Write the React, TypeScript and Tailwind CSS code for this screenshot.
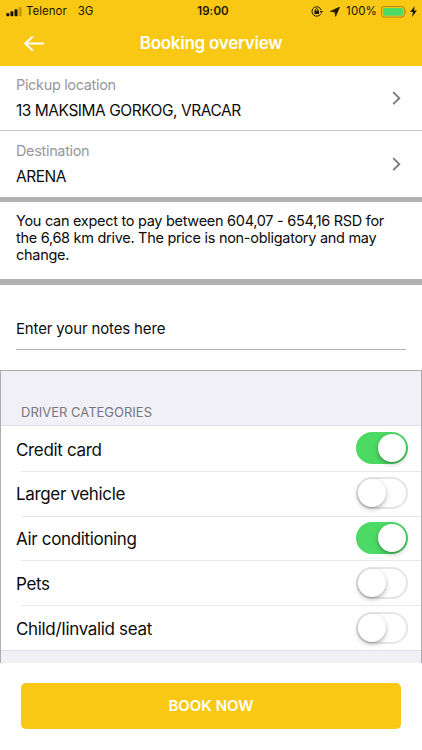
import { useState } from 'react';

type Location = {
    label: string;
    value: string;
};

const LOCATIONS: Location[] = [
    { label: "Pickup location", value: "13 MAKSIMA GORKOG, VRACAR" },
    { label: "Destination", value: "ARENA" }
];

const CATEGORIES = [
    { name: "Credit card", enabled: true },
    { name: "Larger vehicle", enabled: false },
    { name: "Air conditioning", enabled: true },
    { name: "Pets", enabled: false },
    { name: "Child/Iinvalid seat", enabled: false }
];

function StatusBar() {
    return(
        <div className="grid grid-cols-3 h-[22px] items-center pt-px text-[11.5px] leading-none text-[#1c1600]">
            <div className="flex items-center pl-1.5">
                <svg className="mr-1 h-2.5 w-4" viewBox="0 0 16 10">
                    <rect x="0.3" y="6" width="3" height="3.2" rx="0.8" fill="#1c1600" />
                    <rect x="4.4" y="4.3" width="3" height="4.9" rx="0.8" fill="#1c1600" />
                    <rect x="8.5" y="2.3" width="3" height="6.9" rx="0.8" fill="#1c1600" />
                    <rect x="12.7" y="0" width="3" height="9.2" rx="0.8" fill="#1c1600" opacity="0.25" />
                </svg>
                <span>Telenor</span>
                <span className="ml-[11px]">3G</span>
            </div>
            <p className="text-center font-semibold pl-1 tracking-[0.1px]">19:00</p>
            <div className="flex items-center justify-end pr-[5px]">
                <svg className="mr-[7px] h-[11px] w-3" viewBox="0 0 12 11" fill="none" stroke="#1c1600">
                    <path d="M9.9 7.6A4.7 4.7 0 1 1 10.2 4.2" strokeWidth="1" />
                    <path d="M8.7 5H12L10.4 7.2Z" fill="#1c1600" stroke="none" />
                    <rect x="3.4" y="4.7" width="4.6" height="3.4" rx="0.4" fill="#1c1600" stroke="none" />
                    <path d="M4.4 5V4A1.3 1.3 0 0 1 7 4V5" strokeWidth="0.9" />
                </svg>
                <svg className="mr-1.5 h-2.5 w-2.5" viewBox="0 0 10 10">
                    <path d="M9.7 0L5.6 9.4L4.9 5L0.2 4.4Z" fill="#1c1600" stroke="#1c1600" strokeWidth="0.6" strokeLinejoin="round" />
                </svg>
                <span className="mr-1 tracking-[0.1px]">100%</span>
                <svg className="mr-[3px] h-3 w-[26px]" viewBox="0 0 26 12">
                    <rect x="0.5" y="0.5" width="22.8" height="10.6" rx="2.4" fill="none" stroke="#a98a1c" />
                    <rect x="1.9" y="1.9" width="20" height="7.8" rx="1.2" fill="#4cd964" />
                    <path d="M24.4 4.1Q26.4 5.8 24.4 7.5Z" fill="#a98a1c" />
                </svg>
                <svg className="h-[11px] w-[7px]" viewBox="0 0 7 11">
                    <path d="M4.8 0L0.2 6.1H3L2 11L6.9 4.5H4Z" fill="#1c1600" />
                </svg>
            </div>
        </div>
    );
}

function Header() {
    return(
        <header className="h-[66px] bg-[#f9c814]">
            <StatusBar />
            <div className="grid grid-cols-[60px_1fr_60px] h-[43px] items-center">
                <button className="pl-6" aria-label="Back">
                    <svg className="h-4 w-5" viewBox="0 0 20 16" fill="none" stroke="white" strokeWidth="2" strokeLinecap="round" strokeLinejoin="round">
                        <path d="M19.2 7.5H1.2M8.2 0.9L1.2 7.5L8.2 14.1" />
                    </svg>
                </button>
                <h1 className="text-center text-[17px] font-semibold tracking-[-0.25px] text-white">Booking overview</h1>
            </div>
        </header>
    );
}

function LocationRow({ label, value }: Location) {
    return(
        <div className="flex items-center justify-between pl-4 pr-[21px] h-[65px]">
            <div>
                <p className="text-[14.5px] leading-[26px] tracking-[-0.34px] text-[#98989a]">{label}</p>
                <p className="text-[15.5px] leading-[26px] tracking-[-0.47px]">{value}</p>
            </div>
            <svg className="h-3.5 w-[9px]" viewBox="0 0 9 14" fill="none" stroke="#777" strokeWidth="1.8">
                <path d="M1.2 1.2L7.3 7.2L1.2 13.2" />
            </svg>
        </div>
    );
}

function Switch({ on, label, onToggle }: { on: boolean; label: string; onToggle: () => void }) {
    return(
        <button
            role="switch"
            aria-checked={on}
            aria-label={label}
            onClick={onToggle}
            className={`flex items-center h-8 w-[52px] rounded-full border-2 ${on ? "justify-end border-[#4cd964] bg-[#4cd964]" : "justify-start border-[#e5e5e5] bg-white"}`}
        >
            <span className={`size-7 rounded-full bg-white shadow-[0_2px_5px_rgba(0,0,0,0.28),0_1px_1px_rgba(0,0,0,0.12)] ${on ? "" : "-ml-[0.5px]"}`} />
        </button>
    );
}

function DriverCategories() {
    const [categories, setCategories] = useState(CATEGORIES);

    const toggle = (name: string) => {
        setCategories(categories.map((c) => c.name === name ? { ...c, enabled: !c.enabled } : c));
    };

    return(
        <section className="h-[293px] border-t border-x border-[#adadb0] bg-[#f1f0f7]">
            <h2 className="flex h-[55px] items-end border-b border-[#e2e1e6] pl-5 pb-[3px] text-[13px] leading-5 text-[#77777b]">
                DRIVER CATEGORIES
            </h2>
            <ul className="bg-white border-b border-[#e0dfe4]">
                {categories.map((category, i) => (
                    <li key={category.name} className="h-[44.8px]">
                        <div className="flex h-full items-center justify-between pl-[15px] pr-[13px]">
                            <span className="pt-1 text-[17px] tracking-[-0.34px]">{category.name}</span>
                            <Switch on={category.enabled} label={category.name} onToggle={() => toggle(category.name)} />
                        </div>
                        {i < categories.length - 1 && <div className="ml-5 h-px bg-[#e9e9eb]" />}
                    </li>
                ))}
            </ul>
        </section>
    );
}

function App() {
    return(
        <main className="flex flex-col w-[422px] h-[750px] overflow-hidden bg-white text-[#0c0c0c] font-[Inter,'Liberation_Sans',sans-serif]">
            <Header />
            <section className="divide-y divide-[#c4c4c4] h-[131px]">
                {LOCATIONS.map((location) => (
                    <LocationRow key={location.label} {...location} />
                ))}
            </section>
            <section className="h-[88px] border-t-[5px] border-b-[6px] border-[#b2b2b2] px-4 pt-[10px]">
                <p className="w-[385px] text-[14.5px] leading-[17px] tracking-[-0.29px]">
                    You can expect to pay between 604,07 - 654,16 RSD for <br />
                    the 6,68 km drive. The price is non-obligatory and may <br />
                    change.
                </p>
            </section>
            <section className="h-[85px] px-4 pt-[33px]">
                <p className="h-8 border-b border-[#b5b5b5] text-[15px] leading-[21px] tracking-[-0.15px]">Enter your notes here</p>
            </section>
            <DriverCategories />
            <footer className="px-[21px] pt-5">
                <button className="w-full h-[46px] rounded-[5px] bg-[#f9c814] pt-px text-[15px] font-semibold text-white">
                    BOOK NOW
                </button>
            </footer>
        </main>
    );
}

export default App;
